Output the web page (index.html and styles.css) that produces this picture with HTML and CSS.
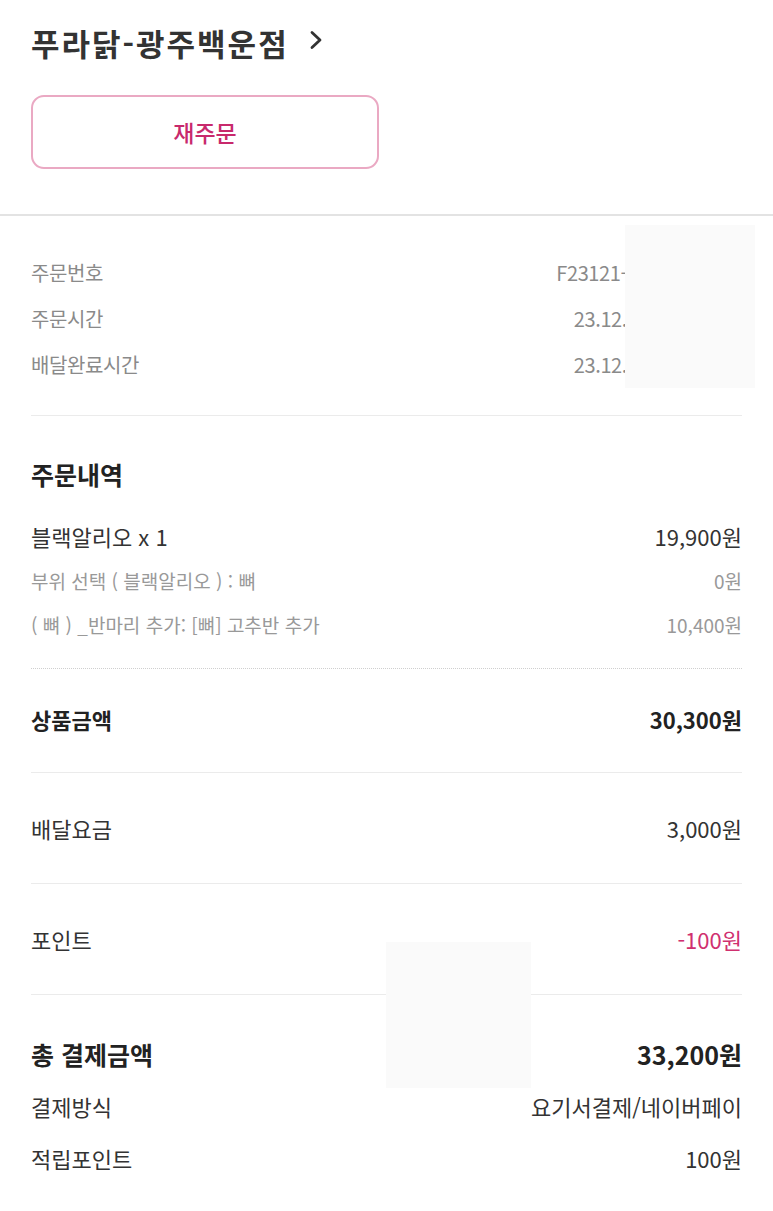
FILE: index.html
```html
<!DOCTYPE html>
<html lang="ko">
<head>
  <meta charset="utf-8">
  <title>주문상세</title>
  <link rel="stylesheet" href="styles.css">
</head>
<body>
  <div class="page">
    <section class="store">
      <h1 class="store-name">푸라닭-광주백운점
        <svg class="chevron" width="14" height="22" viewBox="0 0 14 22">
          <path d="M3 3.5 L11 11 L3 18.5" fill="none" stroke="#333" stroke-width="2.8" stroke-linecap="round" stroke-linejoin="round"/>
        </svg>
      </h1>
      <button class="reorder">재주문</button>
    </section>

    <section class="info">
      <div class="info-row"><span>주문번호</span><span class="info-value">F23121-</span></div>
      <div class="info-row"><span>주문시간</span><span class="info-value">23.12.</span></div>
      <div class="info-row"><span>배달완료시간</span><span class="info-value">23.12.</span></div>
    </section>

    <section class="order">
      <h2 class="order-title">주문내역</h2>
      <div class="item-row"><span>블랙알리오 x 1</span><span>19,900원</span></div>
      <div class="option-row"><span>부위 선택 ( 블랙알리오 ) : 뼈</span><span>0원</span></div>
      <div class="option-row"><span>( 뼈 ) _반마리 추가: [뼈] 고추반 추가</span><span>10,400원</span></div>
    </section>

    <section class="summary">
      <div class="sum-row sum-first strong"><span>상품금액</span><span>30,300원</span></div>
      <div class="sum-row"><span>배달요금</span><span>3,000원</span></div>
      <div class="sum-row"><span>포인트</span><span class="minus">-100원</span></div>
    </section>

    <section class="total">
      <div class="total-row total-main"><span>총 결제금액</span><span>33,200원</span></div>
      <div class="total-row"><span>결제방식</span><span>요기서결제/네이버페이</span></div>
      <div class="total-row"><span>적립포인트</span><span>100원</span></div>
    </section>

    <!-- blurred-out areas from the screenshot -->
    <div class="mask mask-info"></div>
    <div class="mask mask-total"></div>
  </div>
</body>
</html>
```

FILE: styles.css
```css
body {
  margin: 0;
  background: #fff;
  font-family: "Noto Sans CJK KR", "Noto Sans", sans-serif;
  color: #333;
}

.page {
  position: relative;
  width: 773px;
  min-height: 1211px;
}

/* store header */
.store {
  padding: 0 31px 45px;
  border-bottom: 2px solid #e3e3e3;
}

.store-name {
  margin: 0;
  height: 84px;
  display: flex;
  align-items: center;
  gap: 20px;
  font-size: 31px;
  font-weight: 700;
  color: #333;
  letter-spacing: 2px;
}

.chevron {
  margin-top: -4px;
}

.reorder {
  display: block;
  margin-top: 11px;
  width: 348px;
  height: 74px;
  background: #fff;
  border: 2px solid #eaa9c3;
  border-radius: 13px;
  font-family: inherit;
  font-size: 23px;
  font-weight: 500;
  color: #c8296c;
}

/* order info */
.info {
  margin: 0 31px;
  padding: 33px 0 28px;
  border-bottom: 1px solid #ebebeb;
}

.info-row {
  height: 46px;
  display: flex;
  justify-content: space-between;
  align-items: center;
  font-size: 20px;
  color: #8a8a8a;
  letter-spacing: -0.4px;
}

.info-value {
  margin-right: 115px;
}

/* order items */
.order {
  margin: 0 31px;
  padding: 38px 0 22px;
  border-bottom: 1px dotted #cfcfcf;
}

.order-title {
  margin: 0 0 20px;
  height: 40px;
  line-height: 40px;
  font-size: 25px;
  font-weight: 700;
  color: #222;
}

.item-row,
.option-row {
  display: flex;
  justify-content: space-between;
  align-items: center;
  height: 44px;
}

.item-row {
  font-size: 22px;
  color: #333;
}

.option-row {
  font-size: 19px;
  color: #999;
}

/* summary */
.summary {
  margin: 0 31px;
}

.sum-row {
  display: flex;
  justify-content: space-between;
  align-items: center;
  height: 110px;
  border-bottom: 1px solid #ebebeb;
  font-size: 22px;
  color: #333;
}

.sum-first {
  box-sizing: border-box;
  height: 104px;
  padding-bottom: 3px;
}

.strong {
  font-size: 22px;
  font-weight: 700;
  color: #222;
}

.minus {
  color: #d0306f;
}

/* total */
.total {
  margin: 0 31px;
  padding-top: 33px;
}

.total-row {
  display: flex;
  justify-content: space-between;
  align-items: center;
  height: 52px;
  font-size: 22px;
  color: #333;
}

.total-main {
  font-size: 25px;
  font-weight: 700;
  color: #222;
}

/* masked regions */
.mask {
  position: absolute;
  background: #fafafa;
}

.mask-info {
  left: 625px;
  top: 225px;
  width: 130px;
  height: 163px;
}

.mask-total {
  left: 386px;
  top: 942px;
  width: 145px;
  height: 146px;
}
```
